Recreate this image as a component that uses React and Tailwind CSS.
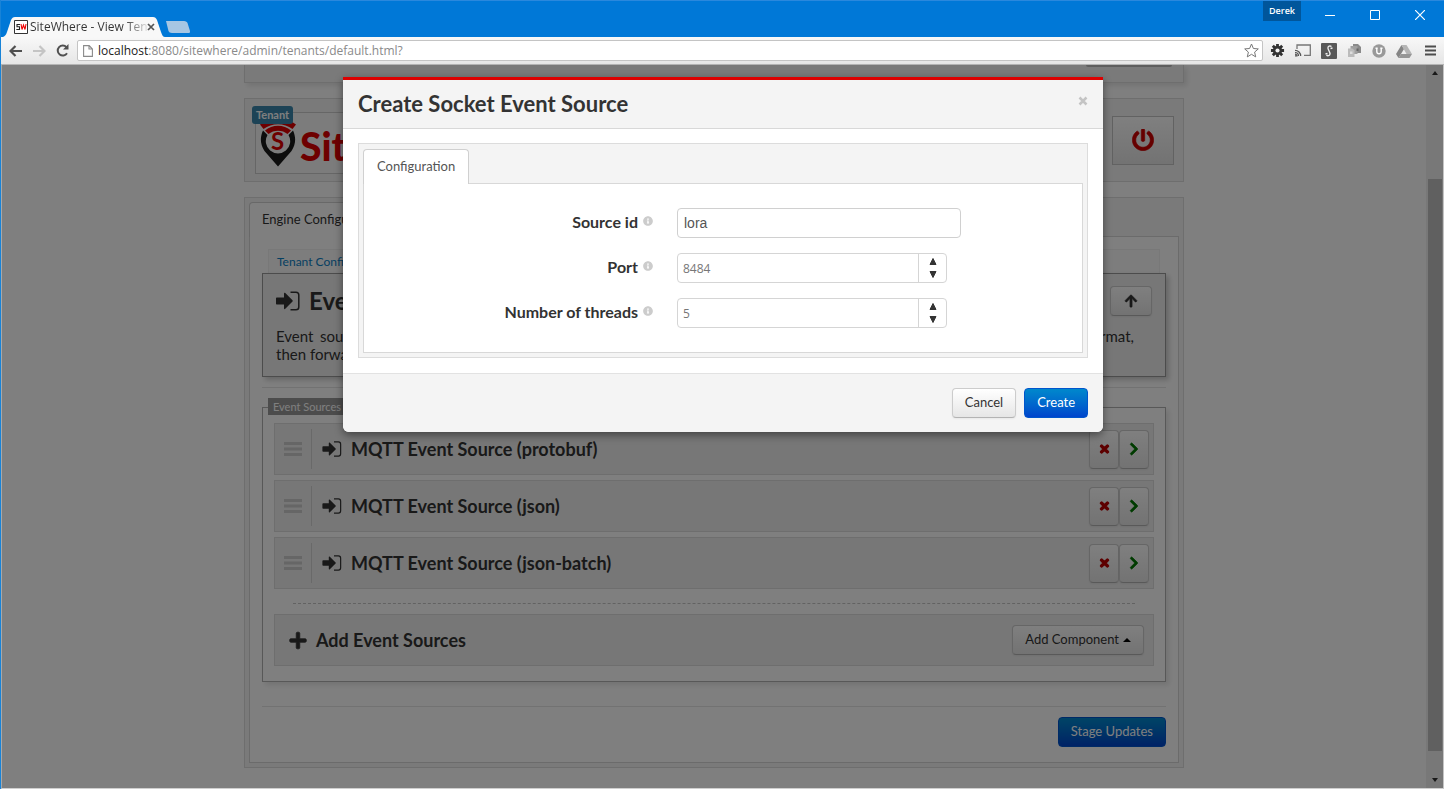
import React from "react";
import { FaArrowUp, FaChevronRight, FaInfoCircle, FaPlus, FaPowerOff, FaTimes } from "react-icons/fa";

const SignInIcon = ({ className }) => (
  <svg viewBox="0 0 24 20" className={className} aria-hidden="true">
    <path d="M1 6.500h7V2.600c0-.9.7-1.100 1.300-.5l7.200 7.200c.4.4.4.9 0 1.300l-7.200 7.200c-.6.6-1.300.4-1.300-.5V13.500H1c-.6 0-1-.4-1-1v-5c0-.6.4-1 1-1z" fill="currentColor" />
    <path d="M14.500 1.200H20a2.800 2.800 0 0 1 2.800 2.800v12a2.800 2.800 0 0 1-2.800 2.800h-5.500" fill="none" stroke="currentColor" strokeWidth="1.500" />
  </svg>
);

const BackArrow = ({ className }) => (
  <svg viewBox="0 0 13 12" className={className} aria-hidden="true">
    <path d="M6.500 1 1.500 6l5 5M2 6h11" fill="none" stroke="currentColor" strokeWidth="2.200" />
  </svg>
);

const lightButton = "rounded border border-[#cccccc] border-b-[#b3b3b3] bg-linear-to-b from-white to-[#e6e6e6] text-[#333333] shadow-[0_1px_2px_rgba(0,0,0,0.05)]";
const blueButton = "h-[30px] rounded border border-[#0055cc] bg-linear-to-b from-[#0088cc] to-[#0044cc] px-3 text-[13px] text-white";

function Browser() {
  return (
    <header className="shrink-0">
      <div className="flex h-[37px] items-end border-t border-[#2a88dd] bg-[#0078d7] pl-0.5">
        <div className="relative h-5 w-[162px]">
          <svg viewBox="0 0 162 20" className="absolute inset-0 h-5 w-[162px]" aria-hidden="true">
            <path d="M0 20c2-1 3-2 4-5L8 3c1-2 2-3 4-3h138c2 0 3 1 4 3l4 12c1 3 2 5 4 5z" fill="#f8f8f8" />
          </svg>
          <div className="relative flex h-5 items-center pl-[11px]">
            <svg viewBox="0 0 14 14" className="h-[14px] w-[14px]" aria-hidden="true">
              <path d="M.5.5h13v13H.5z" fill="#fff" stroke="#333" />
              <path d="M6 4.500H3v2.300h2.500v2.700H2.300" fill="none" stroke="#222" strokeWidth="1.100" />
              <path d="m7 4 1 5.500L9.500 5 11 9.500 12 4" fill="none" stroke="#e00" strokeWidth="1.100" />
            </svg>
            <span className="ml-[2px] w-[117px] bg-linear-to-r from-[#333333] from-80% to-[#dddddd] bg-clip-text text-xs whitespace-nowrap text-transparent">SiteWhere - View Ten</span>
            <button aria-label="Close tab">
              <svg viewBox="0 0 8 8" className="h-2 w-2" aria-hidden="true"><path d="m1 1 6 6m0-6L1 7" stroke="#555" strokeWidth="1.700" /></svg>
            </button>
          </div>
        </div>
        <button aria-label="New tab" className="mb-1">
          <svg viewBox="0 0 25 12" className="h-3 w-[25px]" aria-hidden="true"><path d="M1 0h18c2 0 3 1 3.500 2L25 10c0 1 0 2-1 2H7c-2 0-3-1-3.500-2z" fill="#a6c6e3" /></svg>
        </button>
        <div className="ml-auto flex items-start self-stretch text-white">
          <button className="mr-6 flex h-5 w-[38px] items-center justify-center bg-[#00569b] text-[9px] font-semibold">Derek</button>
          <div className="mt-[9px] flex gap-[35px] pr-[19px]">
            <button aria-label="Minimize"><svg viewBox="0 0 10 10" className="h-[10px] w-[10px]"><path d="M0 5.500h10" stroke="#fff" /></svg></button>
            <button aria-label="Maximize"><svg viewBox="0 0 10 10" className="h-[10px] w-[10px]"><path d="M.5.5h9v9h-9z" stroke="#fff" fill="none" /></svg></button>
            <button aria-label="Close window"><svg viewBox="0 0 10 10" className="h-[10px] w-[10px]"><path d="m0 0 10 10M10 0 0 10" stroke="#fff" strokeWidth="1.200" /></svg></button>
          </div>
        </div>
      </div>
      <div className="flex h-7 items-center border-b border-[#b5b5b5] bg-linear-to-b from-[#f8f8f8] to-[#e6e6e6] pr-2 pl-2">
        <button aria-label="Back" className="text-[#505050]"><BackArrow className="h-3 w-[13px]" /></button>
        <button aria-label="Forward" className="ml-[11px] rotate-180 text-[#c4c4c4]"><BackArrow className="h-3 w-[13px]" /></button>
        <button aria-label="Reload" className="ml-[10px] text-[#505050]">
          <svg viewBox="0 0 13 13" className="h-[13px] w-[13px]"><path d="M11 9.200A5 5 0 1 1 10.500 3.300" fill="none" stroke="currentColor" strokeWidth="2" /><path d="M12.500 0v5.500H7z" fill="currentColor" /></svg>
        </button>
        <div className="ml-2 flex h-[21px] min-w-0 flex-1 items-center rounded-xs border border-[#c4c4c4] bg-white pr-[3px] pl-[5px]">
          <svg viewBox="0 0 10 12" className="h-3 w-[10px] shrink-0"><path d="M.6.6h5.600L9.400 4v7.400H.6zM6 .6V4h3.400" fill="none" stroke="#8a8a8a" strokeWidth="1.100" /></svg>
          <div className="ml-[5px] flex-1 truncate text-[12px] leading-5 text-[#8a8a8a]"><span className="text-[#222222]">localhost</span>:8080/sitewhere/admin/tenants/default.html?</div>
          <button aria-label="Bookmark this page"><svg viewBox="0 0 15 15" className="h-[15px] w-[15px]"><path d="m7.500 1 1.900 4.500 4.900.4-3.700 3.200 1.100 4.800-4.200-2.600-4.200 2.600 1.100-4.800L.7 5.900l4.900-.4z" fill="#fff" stroke="#777" /></svg></button>
        </div>
        <div className="ml-[7px] flex items-center gap-[10px]">
          <button aria-label="Settings"><svg viewBox="0 0 16 16" className="h-[15px] w-[15px]"><g stroke="#333" strokeWidth="3"><path d="M8 1v14M1 8h14M3 3l10 10M13 3 3 13" /></g><circle cx="8" cy="8" r="5" fill="#333" /><circle cx="8" cy="8" r="2.200" fill="#f2f2f2" /></svg></button>
          <button aria-label="Cast"><svg viewBox="0 0 16 13" className="h-[13px] w-4"><path d="M2 5V1h13.300v10.300H9" fill="none" stroke="#777" strokeWidth="1.300" /><path d="M0 12v-2a2 2 0 0 1 2 2zM0 8.500A3.500 3.500 0 0 1 3.500 12M0 6.300A5.700 5.700 0 0 1 5.700 12" fill="none" stroke="#555" strokeWidth="1.200" /></svg></button>
          <button aria-label="Script extension"><svg viewBox="0 0 16 16" className="h-4 w-4"><rect width="16" height="16" rx="1" fill="#585858" /><path d="M10.500 3.500C9 2.500 6.500 3 7 5.500c.3 1.800 2.200 3.500 2 5.500-.2 1.700-2.500 2.200-3.500 1M9.500 5.500l2-.5M4.500 11l2-.6" fill="none" stroke="#eee" strokeWidth="1.400" /></svg></button>
          <button aria-label="Copy extension"><svg viewBox="0 0 15 15" className="h-[15px] w-[15px]"><path d="M6 1h5l3 3v6H6z" fill="#8a8a8a" /><path d="M3.500 3h7v8h-7z" fill="#a0a0a0" /><path d="M1 5.500h4.500l2 2V14H1z" fill="#bbb" /><path d="M3 8.500h2.500v2.500H3z" fill="#ddd" /><path d="M9.500 5.500h2v2.500h-2z" fill="#666" /></svg></button>
          <button aria-label="Shield extension"><svg viewBox="0 0 14 14" className="h-[14px] w-[14px]"><circle cx="7" cy="7" r="6.700" fill="#999" /><path d="M4.800 4v3.500a2.200 2.200 0 0 0 4.400 0V4M3.500 4.200h2.200M8.300 4.200h2.200" fill="none" stroke="#fff" strokeWidth="1.400" /></svg></button>
          <button aria-label="Drive extension"><svg viewBox="0 0 16 14" className="h-[14px] w-4"><path d="M5.500 1 0 10l2.500 4L8 5z" fill="#858585" /><path d="M5.500 1h5L16 10h-5.500z" fill="#b5b5b5" /><path d="M5 10h11l-2.500 4h-11z" fill="#969696" /></svg></button>
          <button aria-label="Menu" className="ml-[3px]"><svg viewBox="0 0 11 11" className="h-[11px] w-[11px]"><path d="M0 1.500h11M0 5.500h11M0 9.500h11" stroke="#4d4d4d" strokeWidth="2" /></svg></button>
        </div>
      </div>
    </header>
  );
}

function Logo() {
  return (
    <div className="relative mt-[5px] ml-[5px] h-[62px] w-[220px] border border-[#cccccc] bg-[#f8f8f8]">
      <svg viewBox="0 0 36 48" className="absolute top-[6px] left-1 h-12 w-9" aria-hidden="true">
        <path d="M3 11.500C-.5 19 .5 26 4.500 32L18 47.500 31.500 32c4-6 5-13 1.500-20.500L28.500 16a12.200 12.200 0 1 1-21 0z" fill="#1a1a1a" />
        <path d="M0 5.500C10-2 26-2 36 5.500L32.500 10C24 3.500 12 3.500 3.500 10z" fill="#dd0000" />
        <path d="M5 11.500c7-6.500 19-6.500 26 0L27.500 15c-5-4.500-14-4.500-19 0z" fill="#dd0000" />
      </svg>
      <span className="absolute top-[14px] left-[15px] text-[24px] leading-7 font-bold text-[#dd0000]">S</span>
      <span className="absolute top-[11px] left-[44px] text-[39px] leading-[44px] font-black text-[#dd0000]">SiteWhere</span>
      <span className="absolute top-[-7px] left-[-4px] rounded-[3px] bg-[#3a87ad] px-[4px] text-[11px] leading-[18px] font-bold text-white">Tenant</span>
    </div>
  );
}

function SourceRow({ name }) {
  return (
    <li className="flex h-[52px] items-center border border-[#dcdcdc] bg-[#eeeeee] pr-1">
      <svg viewBox="0 0 18 14" className="ml-[9px] h-[14px] w-[18px]" aria-hidden="true"><path d="M0 1.500h18M0 7h18M0 12.500h18" stroke="#cccccc" strokeWidth="3" /></svg>
      <span className="ml-[9px] h-10 border-l border-[#d2d2d2]" />
      <SignInIcon className="ml-[10px] h-4 w-5" />
      <h3 className="ml-[9px] flex-1 text-[18px] leading-6 font-bold">{name}</h3>
      <div className="flex">
        <button aria-label={`Delete ${name}`} className={`${lightButton} flex h-[39px] w-[30px] items-center justify-center`}><FaTimes className="h-3 w-[11px] stroke-current stroke-[50px] text-[#bb0000]" /></button>
        <button aria-label={`Open ${name}`} className={`${lightButton} flex h-[39px] w-[30px] items-center justify-center`}><FaChevronRight className="h-[14px] w-3 stroke-current stroke-[30px] text-[#007700]" /></button>
      </div>
    </li>
  );
}

function Page() {
  return (
    <div className="mx-auto flex max-w-[940px] flex-col text-[#333333]">
      <section className="flex h-[18px] items-start justify-end border border-t-0 border-[#dcdcdc] bg-[#f4f4f4] pr-[11px] shadow-[3px_3px_5px_rgba(0,0,0,0.1)]">
        <span className="h-[2px] w-[86px] rounded-b bg-[#bbbbbb]" />
      </section>
      <section className="mt-[15px] flex h-[84px] items-center justify-between border border-[#dcdcdc] bg-[#f4f4f4] pr-[9px] pl-[5px]">
        <Logo />
        <button aria-label="Power" className="flex h-[49px] w-[62px] items-center justify-center border border-[#c4c4c4] bg-linear-to-b from-white to-[#e6e6e6]"><FaPowerOff className="h-[22px] w-[22px] stroke-current stroke-[14px] text-[#cc0000]" /></button>
      </section>
      <section className="mt-[15px] border border-[#dcdcdc] bg-[#f4f4f4] p-1">
        <div className="flex">
          <button className="relative z-10 -mb-px h-[35px] rounded-t border border-b-0 border-[#d0d0d0] bg-white px-3 text-[13px]">Engine Configuration</button>
        </div>
        <div className="border border-[#d6d6d6] bg-white px-3 pt-3 pb-[15px]">
          <nav className="mx-[6px] border border-b-0 border-[#f0f0f0] bg-[#fafafa] px-2 py-[2px] text-[12px] leading-[19px]"><a href="#tenant" className="text-[#0b80c4]">Tenant Configuration</a></nav>
          <section className="h-[104px] border border-[#999999] bg-[#eeeeee] px-[13px] shadow-[3px_3px_5px_rgba(0,0,0,0.2)]">
            <div className="flex items-center pt-3">
              <SignInIcon className="h-5 w-6" />
              <h2 className="ml-[9px] flex-1 text-[24px] leading-[28px] font-bold">Event Sources</h2>
              <button aria-label="Go up" className={`${lightButton} flex h-[30px] w-[42px] items-center justify-center`}><FaArrowUp className="h-[14px] w-[14px] stroke-current stroke-[20px]" /></button>
            </div>
            <p className="mt-[11px] pr-[18px] text-[15px] leading-[18px]">
              <span className="block [text-align-last:justify]">Event sources are responsible for bringing data into the system. They listen for events, decode them into a common format,</span>
              then forward them to inbound processing.
            </p>
          </section>
          <hr className="mt-[10px] border-[#e4e4e4]" />
          <fieldset className="relative mt-[19px] min-w-0 border border-[#b0b0b0] px-[11px] pt-[15px] pb-[15px] shadow-[3px_3px_5px_rgba(0,0,0,0.1)]">
            <legend className="absolute top-[-10px] left-[5px] bg-[#999999] px-[5px] text-[11px] leading-[17px] text-white">Event Sources</legend>
            <ul className="flex flex-col gap-[5px]">
              <SourceRow name="MQTT Event Source (protobuf)" />
              <SourceRow name="MQTT Event Source (json)" />
              <SourceRow name="MQTT Event Source (json-batch)" />
            </ul>
            <hr className="mx-[19px] mt-[14px] border-t border-dashed border-[#c4c4c4]" />
            <div className="mt-[10px] flex h-[52px] items-center border border-[#dcdcdc] bg-[#eeeeee] pr-[9px] pl-[14px]">
              <FaPlus className="h-[19px] w-[18px] stroke-current stroke-[20px]" />
              <h3 className="ml-[9px] flex-1 text-[18px] leading-6 font-bold">Add Event Sources</h3>
              <button className={`${lightButton} flex h-[30px] items-center gap-1 px-3 text-[13px]`}>Add Component<svg viewBox="0 0 8 4" className="h-1 w-2" aria-hidden="true"><path d="m0 4 4-4 4 4z" fill="#000" /></svg></button>
            </div>
          </fieldset>
          <hr className="mt-6 border-[#e4e4e4]" />
          <div className="flex justify-end pt-[10px]"><button className={blueButton}>Stage Updates</button></div>
        </div>
      </section>
    </div>
  );
}

function FieldLabel({ htmlFor, children }) {
  return (
    <label htmlFor={htmlFor} className="flex w-[289px] shrink-0 justify-end pb-[3px] text-[16px] leading-5 font-bold text-[#333333]">
      {children}<FaInfoCircle className="mt-1 ml-[5px] h-[10px] w-[10px] text-[#cccccc]" />
    </label>
  );
}

function NumberField({ id, label, value }) {
  return (
    <div className="flex h-[30px] items-center gap-6">
      <FieldLabel htmlFor={id}>{label}</FieldLabel>
      <div className="flex h-[30px] w-[270px] rounded border border-[#d5d5d5] bg-white">
        <input id={id} defaultValue={value} inputMode="numeric" className="min-w-0 flex-1 rounded-l pt-px pl-[5px] font-['Open_Sans',sans-serif] text-[12px] text-[#777777] outline-none" />
        <div className="flex w-7 flex-col items-center justify-between border-l border-[#d5d5d5] py-[4px]">
          <button aria-label={`Increase ${label}`} className="flex"><svg viewBox="0 0 8 7" className="h-[7px] w-2"><path d="m1 6.500 3-6 3 6z" fill="#333" stroke="#333" /></svg></button>
          <button aria-label={`Decrease ${label}`} className="flex"><svg viewBox="0 0 8 7" className="h-[7px] w-2"><path d="m1 .5 3 6 3-6z" fill="#333" stroke="#333" /></svg></button>
        </div>
      </div>
    </div>
  );
}

function Dialog() {
  return (
    <div role="dialog" aria-labelledby="dialog-title" className="w-[760px] max-w-full rounded-b-md border-t-[3px] border-[#dd0000] bg-white shadow-[0_3px_8px_rgba(0,0,0,0.45)]">
      <div className="flex h-[49px] items-start justify-between border-b border-[#d8d8d8] bg-[#f4f4f4] px-[15px]">
        <h1 id="dialog-title" className="pt-[9px] text-[22px] leading-[30px] font-bold text-[#333333]">Create Socket Event Source</h1>
        <button aria-label="Close" className="mt-4"><svg viewBox="0 0 10 10" className="h-[10px] w-[10px]"><path d="m1.500 1.500 7 7m0-7-7 7" stroke="#c4c4c4" strokeWidth="2.500" /></svg></button>
      </div>
      <div className="px-[15px] pt-[14px] pb-[15px]">
        <div className="border border-[#dcdcdc] bg-[#f4f4f4] p-1">
          <div className="flex pt-px">
            <button className="relative z-10 -mb-px h-[35px] rounded-t border border-b-0 border-[#d0d0d0] bg-white px-[13px] text-[13px] text-[#555555]">Configuration</button>
          </div>
          <div className="flex flex-col gap-[15px] border border-[#d8d8d8] bg-white py-6">
            <div className="flex h-[30px] items-center gap-6">
              <FieldLabel htmlFor="source-id">Source id</FieldLabel>
              <input id="source-id" defaultValue="lora" className="h-[30px] w-[284px] rounded border border-[#d0d0d0] px-[6px] font-['Liberation_Sans',sans-serif] text-[14px] text-[#555555] outline-none" />
            </div>
            <NumberField id="port" label="Port" value="8484" />
            <NumberField id="threads" label="Number of threads" value="5" />
          </div>
        </div>
      </div>
      <div className="flex justify-end gap-2 rounded-b-md border-t border-[#e2e2e2] bg-[#f4f4f4] px-[15px] py-[14px]">
        <button className={`${lightButton} h-[30px] px-3 text-[13px]`}>Cancel</button>
        <button className={blueButton}>Create</button>
      </div>
    </div>
  );
}

export default function App() {
  return (
    <div className="flex min-h-screen flex-col border-l border-[#1883d7] bg-white font-['Open_Sans',sans-serif]">
      <Browser />
      <main className="relative flex flex-1 border-r border-b border-l border-r-[#c4c4c4] border-b-[#cfcfcf] border-l-[#a8a8a8] font-[Lato,sans-serif]">
        <div className="flex-1 pb-5"><Page /></div>
        <div className="flex w-[17px] flex-col items-center bg-[#f0f0f0] py-[6px]">
          <svg viewBox="0 0 6 4" className="h-1 w-[6px]"><path d="m0 4 3-4 3 4z" fill="#333" /></svg>
          <span className="flex-[104]" />
          <span className="w-[14px] flex-[570] bg-[#c1c1c1]" />
          <span className="flex-[27]" />
          <svg viewBox="0 0 6 4" className="h-1 w-[6px]"><path d="m0 0 3 4 3-4z" fill="#333" /></svg>
        </div>
        <div className="absolute inset-0 z-20 flex items-start justify-center bg-black/50 pt-3 pl-px"><Dialog /></div>
      </main>
    </div>
  );
}
